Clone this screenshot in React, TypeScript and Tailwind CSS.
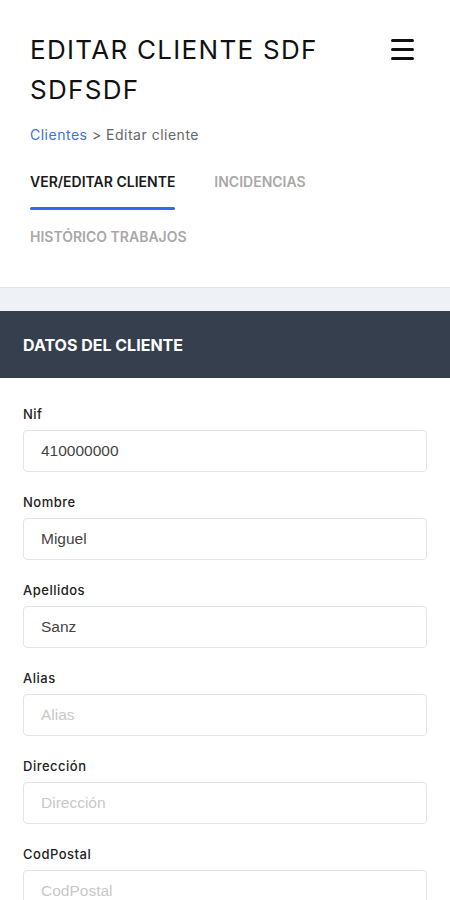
import React from "react";

const FIELDS = [
  { label: "Nif", value: "410000000" },
  { label: "Nombre", value: "Miguel" },
  { label: "Apellidos", value: "Sanz" },
  { label: "Alias", value: "" },
  { label: "Dirección", value: "" },
  { label: "CodPostal", value: "" },
];

export default function App() {
  return (
    <div className="w-[450px] min-h-[900px] bg-white font-['Inter',sans-serif] text-[#111]">
      {/* Page header */}
      <div className="px-[30px] pt-[30px]">
        <div className="flex justify-between items-start">
          <h1 className="text-[26px] leading-[40px] font-normal tracking-[1.3px] text-[#111]">
            EDITAR CLIENTE SDF
            <br />
            SDFSDF
          </h1>
          <button className="mt-[9px] mr-[6px] flex flex-col gap-[6px] w-[23px]">
            <span className="block h-[3px] w-full bg-[#111] rounded-sm" />
            <span className="block h-[3px] w-full bg-[#111] rounded-sm" />
            <span className="block h-[3px] w-full bg-[#111] rounded-sm" />
          </button>
        </div>
        <div className="mt-[15px] text-[14px] leading-[20px] tracking-[0.5px] text-[#666]">
          <span className="text-[#3b72d6]">Clientes</span> &gt; Editar cliente
        </div>

        {/* Tabs */}
        <div className="mt-[27px] flex flex-wrap gap-x-[39px] text-[14px] font-semibold leading-[20px]">
          <div className="flex flex-col">
            <span className="text-[#1a1a1a]">VER/EDITAR CLIENTE</span>
            <span className="mt-[15px] h-[3px] bg-[#2f6cf4] rounded-sm" />
          </div>
          <span className="text-[#a8a8a8]">INCIDENCIAS</span>
          <span className="w-full mt-[17px] text-[#a8a8a8]">HISTÓRICO TRABAJOS</span>
        </div>
      </div>

      {/* Band */}
      <div className="mt-[40px] h-[24px] bg-[#eef2f7] border-t border-[#dfe3e8]" />

      {/* Card header */}
      <div className="h-[67px] bg-[#363f4e] flex items-center px-[23px]">
        <span className="text-white text-[16px] font-bold">DATOS DEL CLIENTE</span>
      </div>

      {/* Form */}
      <div className="px-[23px] pt-[28px] flex flex-col gap-[22px]">
        {FIELDS.map((f) => (
          <div key={f.label} className="flex flex-col">
            <label className="text-[13px] leading-[16px] font-medium tracking-[0.5px] text-[#222]">{f.label}</label>
            <div className="mt-[8px] h-[42px] border border-[#e3e3e3] rounded-[4px] flex items-center px-[17px] text-[15.5px] font-['Liberation_Sans',sans-serif]">
              {f.value ? (
                <span className="text-[#444]">{f.value}</span>
              ) : (
                <span className="text-[#c8c8c8]">{f.label}</span>
              )}
            </div>
          </div>
        ))}
      </div>
    </div>
  );
}
